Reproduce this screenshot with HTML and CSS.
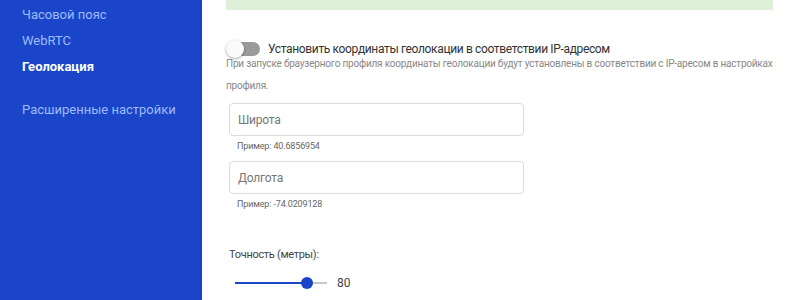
FILE: index.html
```html
<!DOCTYPE html>
<html lang="ru">
<head>
    <meta charset="UTF-8">
    <title>Геолокация</title>
    <link rel="stylesheet" href="styles.css">
</head>
<body>
    <div class="layout">
        <nav class="sidebar">
            <a class="nav-item" href="#">Часовой пояс</a>
            <a class="nav-item" href="#">WebRTC</a>
            <a class="nav-item active" href="#">Геолокация</a>
            <a class="nav-item nav-gap" href="#">Расширенные настройки</a>
        </nav>

        <main class="content">
            <div class="notice"></div>

            <div class="switch-row">
                <span class="switch"><span class="knob"></span></span>
                <span class="switch-label">Установить координаты геолокации в соответствии IP-адресом</span>
            </div>
            <p class="desc">При запуске браузерного профиля координаты геолокации будут установлены в соответствии с IP-аресом в настройках профиля.</p>

            <div class="field">
                <input type="text" class="input" placeholder="Широта">
                <div class="hint">Пример: 40.6856954</div>
            </div>
            <div class="field">
                <input type="text" class="input" placeholder="Долгота">
                <div class="hint">Пример: -74.0209128</div>
            </div>

            <div class="accuracy">
                <div class="acc-label">Точность (метры):</div>
                <div class="slider-row">
                    <div class="slider">
                        <div class="slider-fill" style="width: 78%"></div>
                        <div class="slider-thumb" style="left: 78%"></div>
                    </div>
                    <span class="slider-value">80</span>
                </div>
            </div>
        </main>
    </div>
</body>
</html>
```

FILE: styles.css
```css
body {
    margin: 0;
    font-family: Roboto, "Noto Sans", Arial, sans-serif;
    background: #fff;
    color: #333;
}
.layout {
    display: flex;
    height: 300px;
    overflow: hidden;
}
.sidebar {
    width: 202px;
    flex-shrink: 0;
    background-color: #1a45c9;
    display: flex;
    flex-direction: column;
    padding: 5px 0 0 22px;
    box-sizing: border-box;
}
.nav-item {
    color: #9dbcff;
    text-decoration: none;
    font-size: 13px;
    line-height: 20px;
    margin-bottom: 6px;
}
.nav-item.active {
    color: #fff;
    font-weight: bold;
}
.nav-gap {
    margin-top: 17px;
}
.content {
    flex: 1;
    padding: 0 14px 0 24px;
}
.notice {
    height: 10px;
    background-color: #dff0d8;
}
.switch-row {
    display: flex;
    align-items: center;
    margin-top: 30px;
    height: 18px;
}
.switch {
    position: relative;
    width: 32px;
    height: 14px;
    background: #9a9a9a;
    border-radius: 7px;
    margin: 0 8px 0 2px;
}
.knob {
    position: absolute;
    left: -2px;
    top: -2px;
    width: 18px;
    height: 18px;
    border-radius: 50%;
    background: #fafafa;
    box-shadow: 0 1px 3px rgba(0, 0, 0, 0.35);
}
.switch-label {
    font-size: 12px;
    letter-spacing: -0.35px;
    color: #333;
}
.desc {
    font-size: 10px;
    letter-spacing: -0.2px;
    color: #888;
    line-height: 22px;
    margin: -5px 0 0 0;
}
.field {
    margin: 6px 0 0 3px;
}
.field + .field {
    margin-top: 9px;
}
.input {
    display: block;
    width: 295px;
    height: 33px;
    box-sizing: border-box;
    border: 1px solid #dcdcdc;
    border-radius: 4px;
    padding: 0 8px;
    font-family: inherit;
    font-size: 12px;
    letter-spacing: -0.2px;
    color: #333;
}
.input::placeholder {
    color: #777;
}
.hint {
    font-size: 9px;
    letter-spacing: -0.15px;
    color: #666;
    margin: 4px 0 0 8px;
    line-height: 12px;
}
.accuracy {
    margin: 38px 0 0 3px;
}
.acc-label {
    font-size: 11px;
    letter-spacing: -0.3px;
    color: #444;
    line-height: 14px;
}
.slider-row {
    display: flex;
    align-items: center;
    margin-top: 14px;
}
.slider {
    position: relative;
    width: 92px;
    height: 2px;
    background: #c8c8c8;
    margin-left: 6px;
}
.slider-fill {
    height: 2px;
    background: #1a45c9;
}
.slider-thumb {
    position: absolute;
    top: -5px;
    width: 12px;
    height: 12px;
    margin-left: -6px;
    border-radius: 50%;
    background: #1a45c9;
}
.slider-value {
    margin-left: 10px;
    font-size: 12px;
    color: #444;
}
```
